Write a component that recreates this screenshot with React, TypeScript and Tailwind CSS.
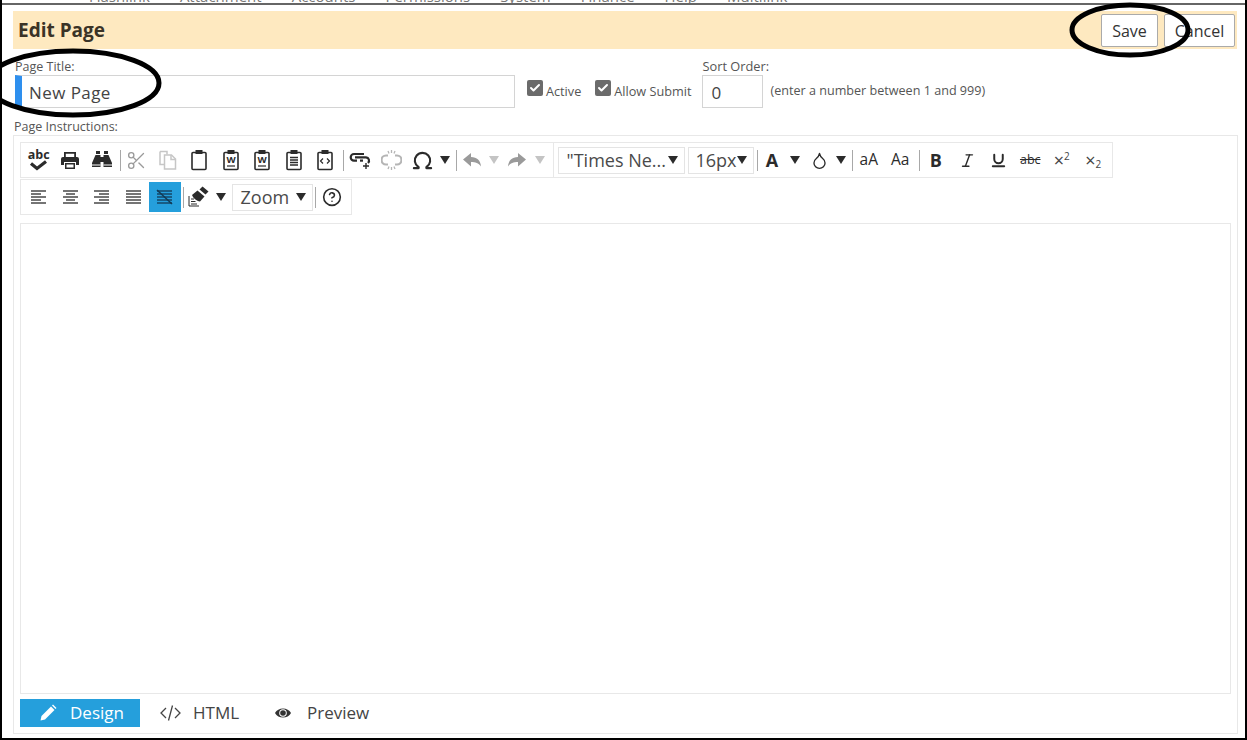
import { Check, CircleHelp, Droplet, Italic, Omega, Scissors, Underline } from "lucide-react";
import type { ReactNode } from "react";

const Caret = ({ muted, className = "" }: { muted?: boolean; className?: string }) => (
  <svg width="10" height="8" viewBox="0 0 10 8" className={`shrink-0 ${className}`}>
    <path d="M0 0h10L5 8z" fill={muted ? "#c4c4c4" : "#2b2b2b"} />
  </svg>
);

const Sep = ({ className = "ml-[2px]" }: { className?: string }) => (
  <span className={`h-[21px] w-px shrink-0 bg-[#a8a8a8] ${className}`} />
);

const Tool = ({ children, className = "w-[31.5px]" }: { children: ReactNode; className?: string }) => (
  <span className={`flex h-[30px] shrink-0 items-center justify-center text-[#2b2b2b] ${className}`}>{children}</span>
);

const Select = ({ label, className }: { label: string; className: string }) => (
  <span className={`flex h-[27px] items-center justify-between border border-[#e4e4e4] pl-2 pr-[6px] text-[18px] text-[#4a4a4a] ${className}`}>
    <span className="whitespace-nowrap leading-none">{label}</span>
    <Caret />
  </span>
);

const CheckBox = ({ label }: { label: string }) => (
  <label className="flex items-center gap-[3px] whitespace-nowrap text-[12.7px] leading-none text-[#555]">
    <span className="-mt-[6px] flex size-4 items-center justify-center rounded-[2px] bg-[#6b6b6b]">
      <Check size={12} strokeWidth={4} color="#fff" />
    </span>
    {label}
  </label>
);

const Clip = ({ children }: { children?: ReactNode }) => (
  <svg width="20" height="22" viewBox="0 0 20 22" fill="none" stroke="#2b2b2b">
    <rect x="3" y="3.5" width="14" height="17" rx="1" strokeWidth="1.6" />
    <rect x="6.5" y="1" width="7" height="4" fill="#2b2b2b" stroke="none" />
    {children}
  </svg>
);

const WordClip = () => (
  <Clip>
    <text x="10" y="14" textAnchor="middle" fontSize="9.5" fontWeight="700" fill="#2b2b2b" stroke="none" fontFamily="Open Sans">W</text>
    <path d="M6 17h8" strokeWidth="1.2" />
  </Clip>
);

const lineSets = {
  left: [15, 10, 15, 10, 15],
  center: [15, 9, 15, 9, 15],
  right: [15, 10, 15, 10, 15],
  justify: [15, 15, 15, 15, 15],
};

const AlignIcon = ({ type, struck }: { type: keyof typeof lineSets; struck?: boolean }) => (
  <svg width="17" height="16" viewBox="0 0 17 16" stroke={struck ? "#123a55" : "#2b2b2b"} strokeWidth="1.3" fill="none">
    {lineSets[type].map((w, i) => {
      const x = type === "center" ? 1 + (15 - w) / 2 : type === "right" ? 16 - w : 1;
      return <path key={i} d={`M${x} ${2 + i * 3}h${w}`} />;
    })}
    {struck && <path d="M1 1l15 14" strokeWidth="1.5" />}
  </svg>
);

const Undo = ({ flip }: { flip?: boolean }) => (
  <svg width="20" height="16" viewBox="0 0 20 16" fill="#9a9a9a" className={flip ? "-scale-x-100" : ""}>
    <path d="M1 7.5L9 1v4c6 0 9.5 3.5 10 9.5-2.5-3.500-5.500-4.500-10-4.500v4.500z" />
  </svg>
);

export default function App() {
  return (
    <div className="relative h-[740px] w-[1247px] overflow-hidden border-x-2 border-b-2 border-black bg-white font-['Open_Sans',sans-serif]">
      {/* cut off page behind the dialog */}
      <div className="-mx-[2px] h-[5px] overflow-hidden border-b-2 border-[#666] bg-white">
        <div className="-mt-[15px] flex gap-[30px] whitespace-nowrap pl-[89px] text-[15px] text-[#777]">
          <span>Flashlink</span>
          <span>Attachment</span>
          <span>Accounts</span>
          <span>Permissions</span>
          <span>System</span>
          <span>Finance</span>
          <span>Help</span>
          <span>Multilink</span>
        </div>
      </div>

      <div className="pl-[11px] pr-[7px] pt-[6px]">
        <div className="mr-px flex h-[38px] items-center justify-between bg-[#fee9c0] pl-[5px] pr-[2px]">
          <h1 className="text-[19px] font-bold text-[#3a3327]">Edit Page</h1>
          <div className="flex gap-[6px]">
            <button className="h-[33px] w-[57px] rounded-[2px] border border-[#aaa] bg-white pt-[2px] text-[16px] text-[#333]">Save</button>
            <button className="h-[33px] w-[71px] rounded-[2px] border border-[#aaa] bg-white pt-[2px] text-[16px] text-[#333]">Cancel</button>
          </div>
        </div>

        <div className="mt-[10px] flex items-end pl-[2px]">
          <div className="w-[500px]">
            <div className="text-[12.5px] leading-4 text-[#555]">Page Title:</div>
            <div className="flex h-[33px] items-center border border-l-[7px] border-[#d4d4d4] border-l-[#2e8fee] pl-[7px] pt-[2px] text-[17px] tracking-wide text-[#444]">
              New Page
            </div>
          </div>
          <div className="ml-3 flex h-[33px] items-center gap-[14px]">
            <CheckBox label="Active" />
            <CheckBox label="Allow Submit" />
          </div>
          <div className="ml-[11px] w-[61px]">
            <div className="-mt-px mb-px whitespace-nowrap text-[12.8px] leading-4 text-[#555]">Sort Order:</div>
            <div className="flex h-[33px] items-center border border-[#d4d4d4] pl-2 pt-[2px] text-[17px] text-[#444]">0</div>
          </div>
          <div className="ml-[7px] flex h-[33px] items-center whitespace-nowrap text-[12.6px] text-[#555]">(enter a number between 1 and 999)</div>
        </div>

        <div className="mt-[11px] pl-px text-[12.5px] leading-4 text-[#555]">Page Instructions:</div>

        <div className="flex h-[599px] flex-col border border-[#e8e8e8] px-[6px] pt-[6px]">
          <div className="flex">
            <div className="flex h-[36px] items-center border border-[#e8e8e8] pl-[2px]">
              <Tool>
                <span className="flex flex-col items-center">
                  <span className="text-[12.5px] font-bold leading-[10px]">abc</span>
                  <svg width="19" height="11" viewBox="0 0 19 11" fill="none" stroke="#2b2b2b" strokeWidth="3.2"><path d="M2 3.500l6 5 9-7" /></svg>
                </span>
              </Tool>
              <Tool>
                <svg width="20" height="19" viewBox="0 0 20 19" fill="#2b2b2b">
                  <path d="M4 1h12v5h-1.800V2.800H5.800V6H4z" />
                  <path d="M1 8a2 2 0 0 1 2-2h14a2 2 0 0 1 2 2v6h-3v-3H4v3H1z" />
                  <path d="M5 12h10v6H5zm1.500 1.500v3h7v-3z" />
                </svg>
              </Tool>
              <Tool>
                <svg width="20" height="18" viewBox="0 0 20 18" fill="#2b2b2b">
                  <rect x="4" y="0" width="4" height="3" />
                  <rect x="12" y="0" width="4" height="3" />
                  <path d="M3.500 4H8.500V16H0V12z" />
                  <path d="M16.500 4H11.500V16H20V12z" />
                  <rect x="8" y="6" width="4" height="5" />
                  <rect x="0" y="13.500" width="8.500" height="1" fill="#fff" />
                  <rect x="11.500" y="13.500" width="8.500" height="1" fill="#fff" />
                </svg>
              </Tool>
              <Sep />
              <Tool className="w-[31.5px] text-[#9a9a9a]"><Scissors size={21} strokeWidth={1.5} /></Tool>
              <Tool>
                <svg width="20" height="20" viewBox="0 0 20 20" fill="none" stroke="#c6c6c6" strokeWidth="1.5">
                  <path d="M2 1.500h7v3M2 1.500v13h4" />
                  <path d="M6.500 5h7l4 4v10h-11z" />
                  <path d="M13 5v4.500h4.500" />
                </svg>
              </Tool>
              <Tool><Clip /></Tool>
              <Tool><WordClip /></Tool>
              <Tool><WordClip /></Tool>
              <Tool><Clip><path d="M6 8.500h8M6 11h8M6 13.500h8M6 16h8" strokeWidth="1.300" /></Clip></Tool>
              <Tool><Clip><path d="M8 9.500l-2.500 2.500 2.500 2.500M12 9.500l2.500 2.500-2.500 2.500" strokeWidth="1.200" /></Clip></Tool>
              <Sep />
              <Tool>
                <svg width="22" height="20" viewBox="0 0 22 20" fill="none" stroke="#2b2b2b" strokeWidth="2.200">
                  <path d="M15 4H5a3.300 3.300 0 0 0 0 6.600h3" />
                  <path d="M6 7.300h11a3.300 3.300 0 0 1 2 5.700" />
                  <path d="M11 10.600h3" />
                  <path d="M17 13v6M14 16h6" strokeWidth="1.400" />
                </svg>
              </Tool>
              <Tool>
                <svg width="21" height="20" viewBox="0 0 21 20" fill="none" stroke="#b5b5b5" strokeWidth="2.200">
                  <path d="M7 5.500H5a4 4 0 0 0 0 9h2M14 5.500h2a4 4 0 0 1 0 9h-2" />
                  <path d="M7 1l1 2.500M14 1l-1 2.500M10.500 0v3M7 19l1-2.500M14 19l-1-2.500M10.500 20v-3" strokeWidth="1.300" />
                </svg>
              </Tool>
              <Tool><Omega size={23} strokeWidth={2.200} /></Tool>
              <Caret className="ml-px" />
              <Sep className="ml-[6px]" />
              <Tool><Undo /></Tool>
              <Caret muted className="ml-px" />
              <Tool className="ml-[2px] w-[31.5px]"><Undo flip /></Tool>
              <Caret muted className="ml-[2px] mr-2" />
            </div>
            <div className="flex h-[36px] w-[559px] items-center border border-l-0 border-[#e8e8e8] pl-[4px]">
              <Select label={'"Times Ne...'} className="w-[127px]" />
              <Select label="16px" className="ml-[3px] w-[66px] pl-[7px]" />
              <Sep className="ml-[3px]" />
              <Tool className="w-[29px]"><span className="text-[18px] font-bold">A</span></Tool>
              <Caret className="ml-[3px]" />
              <Tool className="ml-[4px] w-[31.5px]"><Droplet size={19} strokeWidth={1.700} /></Tool>
              <Caret className="ml-px" />
              <Sep className="ml-[6px]" />
              <Tool><span className="text-[15.5px] leading-none">aA</span></Tool>
              <Tool><span className="text-[15.5px] leading-none">Aa</span></Tool>
              <Sep className="ml-[3px]" />
              <Tool><span className="text-[18px] font-bold leading-none">B</span></Tool>
              <Tool><Italic size={17} strokeWidth={2} /></Tool>
              <Tool><Underline size={17} strokeWidth={2.800} /></Tool>
              <Tool><span className="text-[12.5px] leading-none line-through">abc</span></Tool>
              <Tool>
                <span className="flex items-start text-[#444]">
                  <span className="text-[18px] leading-[18px]">×</span>
                  <span className="text-[10px] leading-[10px]">2</span>
                </span>
              </Tool>
              <Tool>
                <span className="flex items-end text-[#444]">
                  <span className="text-[18px] leading-[18px]">×</span>
                  <span className="text-[10px] leading-[10px]">2</span>
                </span>
              </Tool>
            </div>
          </div>
          <div className="mt-px flex h-[36px] w-[332px] items-center border border-[#e8e8e8] pl-[2px]">
            <Tool><AlignIcon type="left" /></Tool>
            <Tool><AlignIcon type="center" /></Tool>
            <Tool><AlignIcon type="right" /></Tool>
            <Tool><AlignIcon type="justify" /></Tool>
            <Tool className="w-[31.5px] bg-[#259fdc]"><AlignIcon type="justify" struck /></Tool>
            <Sep />
            <Tool className="w-[29px]">
              <svg width="22" height="22" viewBox="0 0 22 22" fill="#2b2b2b">
                <path d="M15.500 .5l6 5-3 3-6-5z" />
                <path d="M10.500 4.500l7 6-4.500 5c-3.500-.500-7-3.500-8-6.500z" />
                <path d="M2 10v10h10" fill="none" stroke="#2b2b2b" strokeWidth="1" />
                <path d="M4 13h3M4 15.500h4.500M4 18h6" fill="none" stroke="#2b2b2b" strokeWidth="1" />
              </svg>
            </Tool>
            <Caret className="ml-[3px]" />
            <Select label="Zoom" className="ml-[6px] w-[81px]" />
            <Sep />
            <Tool className="ml-px w-[31.5px]"><CircleHelp size={20} strokeWidth={1.900} /></Tool>
          </div>
          <div className="mt-2 min-h-0 flex-1 border border-[#e8e8e8]" />
          <div className="mb-[6px] mt-[5px] flex h-[28px] items-center text-[17px]">
            <span className="flex h-full w-[120px] items-center gap-[13px] bg-[#259fdc] pl-[19px] text-[#fff]">
              <svg width="18" height="18" viewBox="0 0 18 18" fill="#fff">
                <path d="M12 2.500l3.500 3.500L6 15.500l-4.500 1 1-4.500z" />
                <path d="M13 1.500l1-1 3.500 3.500-1 1z" />
              </svg>
              Design
            </span>
            <span className="ml-5 flex items-center gap-[12px] text-[#444]">
              <svg width="21" height="20" viewBox="0 0 21 20" fill="none" stroke="#444" strokeWidth="1.300">
                <path d="M6 5l-5 5 5 5M15 5l5 5-5 5M12.500 2.500L8.500 17.500" />
              </svg>
              HTML
            </span>
            <span className="ml-[35px] flex items-center gap-[15px] text-[#444]">
              <svg width="18" height="14" viewBox="0 0 18 14">
                <path d="M1 7c3-6 13-6 16 0-3 6-13 6-16 0z" fill="#333" />
                <circle cx="9" cy="7" r="3.800" fill="#fff" />
                <circle cx="9" cy="7" r="2.800" fill="#333" />
              </svg>
              Preview
            </span>
          </div>
        </div>
      </div>

      {/* hand drawn marks on the screenshot */}
      <svg className="pointer-events-none absolute left-[-2px] top-0" width="1247" height="740" fill="none" stroke="#000" strokeWidth="5">
        <ellipse cx="1130" cy="30" rx="58" ry="25" />
        <ellipse cx="73" cy="83" rx="86" ry="32" />
      </svg>
    </div>
  );
}
